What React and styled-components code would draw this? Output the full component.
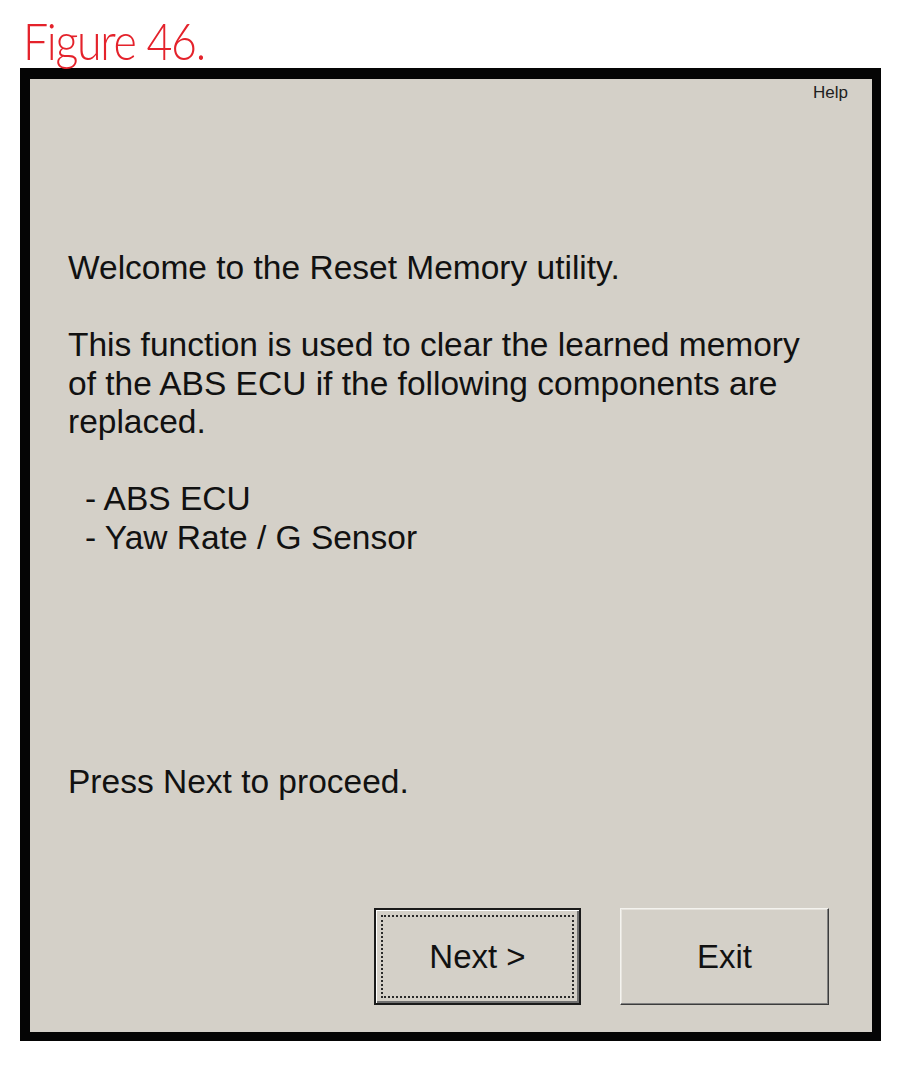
import React from "react";
import styled, { createGlobalStyle } from "styled-components";

const Global = createGlobalStyle`
  html, body {
    margin: 0;
    padding: 0;
    background: #ffffff;
  }
  body {
    font-family: "Liberation Sans", Arial, sans-serif;
  }
`;

const Page = styled.div`
  width: 904px;
  height: 1072px;
  overflow: hidden;
`;

const Caption = styled.div`
  padding: 14px 0 0 23px;
  height: 52px;
  margin-bottom: 2px;
  font-family: Lato, "Noto Sans", sans-serif;
  font-weight: 300;
  font-size: 52px;
  line-height: 52px;
  letter-spacing: -1.5px;
  color: #e4222b;
  transform: scaleX(0.86);
  transform-origin: 23px 0;
`;

const Frame = styled.div`
  margin-left: 20px;
  width: 861px;
  box-sizing: border-box;
  border-style: solid;
  border-color: #050505;
  border-width: 11px 9px 9px 10px;
`;

const Panel = styled.div`
  height: 953px;
  box-sizing: border-box;
  background: #d4d0c8;
  display: flex;
  flex-direction: column;
  padding: 4px 43px 27px 38px;
  color: #111111;
`;

const HelpRow = styled.div`
  display: flex;
  justify-content: flex-end;
  margin-right: -19px;
`;

const Help = styled.span`
  font-size: 17px;
  line-height: 20px;
  color: #202020;
`;

const Text = styled.div`
  font-size: 33.5px;
  line-height: 38.5px;
  margin-top: ${({ $top }) => $top || 0}px;
  padding-left: ${({ $indent }) => ($indent ? 17 : 0)}px;
`;

const Buttons = styled.div`
  margin-top: auto;
  display: flex;
  justify-content: flex-end;
  gap: 39px;
`;

const Button = styled.div`
  position: relative;
  width: ${({ $w }) => $w}px;
  height: 97px;
  box-sizing: border-box;
  display: flex;
  align-items: center;
  justify-content: center;
  font-size: 33px;
  color: #111111;
  background: #d4d0c8;
  border: ${({ $default }) => ($default ? "2px solid #1a1a1a" : "1px solid")};
  border-color: ${({ $default }) =>
    $default ? "#1a1a1a" : "#f4f3ef #3c3c3c #3c3c3c #f4f3ef"};
  box-shadow: ${({ $default }) =>
    $default
      ? "inset 1px 1px 0 #ffffff, inset -2px -2px 0 #707070"
      : "inset -1px -1px 0 #808080, inset 1px 1px 0 #e6e3dd"};
`;

const Focus = styled.span`
  position: absolute;
  inset: 5px;
  border: 2px dotted #2a2a2a;
  pointer-events: none;
`;

export default function App() {
  return (
    <Page>
      <Global />
      <Caption>Figure 46.</Caption>
      <Frame>
        <Panel>
          <HelpRow>
            <Help>Help</Help>
          </HelpRow>
          <Text $top={146}>Welcome to the Reset Memory utility.</Text>
          <Text $top={38.5}>
            This function is used to clear the learned memory
            <br />
            of the ABS ECU if the following components are
            <br />
            replaced.
          </Text>
          <Text $top={38.5} $indent>
            - ABS ECU
            <br />- Yaw Rate / G Sensor
          </Text>
          <Text $top={206}>Press Next to proceed.</Text>
          <Buttons>
            <Button $w={207} $default>
              <Focus />
              Next &gt;
            </Button>
            <Button $w={209}>Exit</Button>
          </Buttons>
        </Panel>
      </Frame>
    </Page>
  );
}
